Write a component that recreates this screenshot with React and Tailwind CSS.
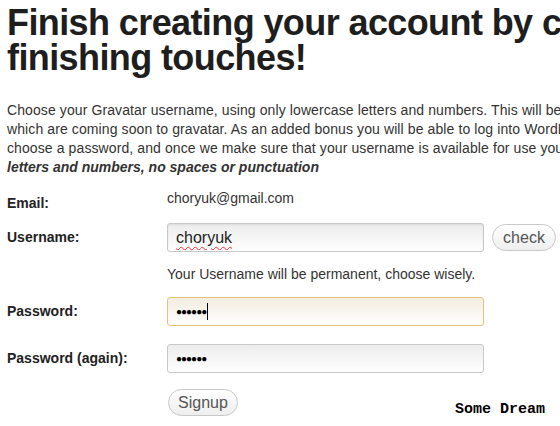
function Field({ label, children, labelClass = "" }) {
  return (
    <div className="flex items-center">
      <div className={"w-[160px] shrink-0 font-bold text-[14px] text-[#222] " + labelClass}>{label}</div>
      <div className="flex items-center">{children}</div>
    </div>
  );
}

export default function App() {
  return (
    <div className="w-[560px] h-[426px] overflow-hidden bg-white relative font-['Liberation_Sans',Arial,sans-serif] text-[#222]">
      <div className="pl-[7px] pt-[5px]">
        <h1 className="font-bold text-[36px] leading-[35px] text-[#1e1e1e] whitespace-nowrap tracking-[-0.6px]">
          Finish creating your account by choosing a username
          <br />
          finishing touches!
        </h1>
        <p className="mt-[26px] text-[14px] leading-[19px] text-[#333] whitespace-nowrap tracking-[0.1px]">
          Choose your Gravatar username, using only lowercase letters and numbers. This will be your
          <br />
          which are coming soon to gravatar. As an added bonus you will be able to log into WordPress
          <br />
          choose a password, and once we make sure that your username is available for use you
          <br />
          <b className="italic tracking-normal">letters and numbers, no spaces or punctuation</b>
        </p>
        <div className="mt-[5px] flex flex-col">
          <Field label="Email:" labelClass="pt-[11px]">
            <span className="text-[14px] text-[#333]">choryuk@gmail.com</span>
          </Field>
          <div className="mt-[9px]">
            <Field label="Username:">
              <div className="w-[317px] h-[29px] border border-[#c8c8c8] rounded-[3px] bg-gradient-to-b from-[#ececec] to-white shadow-[inset_0_1px_2px_rgba(0,0,0,0.08)] flex items-center pl-[8px] text-[16px] text-[#222]">
                <span className="underline decoration-wavy decoration-red-500 decoration-[1px] underline-offset-[3px]">choryuk</span>
              </div>
              <button className="ml-[8px] w-[64px] h-[27px] rounded-full border border-[#c8c8c8] bg-gradient-to-b from-white to-[#eee] text-[16px] text-[#555]">
                check
              </button>
            </Field>
          </div>
          <div className="pl-[160px] mt-[12px] text-[14px] text-[#333]">
            Your Username will be permanent, choose wisely.
          </div>
          <div className="mt-[12px]">
            <Field label="Password:">
              <div className="w-[317px] h-[29px] border border-[#e3c57a] rounded-[3px] bg-gradient-to-b from-[#f2ece0] to-white flex items-center pl-[8px] text-[10px] tracking-[-1px] text-black">
                ●●●●●●<span className="ml-[1px] inline-block w-[1px] h-[17px] bg-black" />
              </div>
            </Field>
          </div>
          <div className="mt-[18px]">
            <Field label="Password (again):">
              <div className="w-[317px] h-[29px] border border-[#c8c8c8] rounded-[3px] bg-gradient-to-b from-[#ececec] to-white flex items-center pl-[8px] text-[10px] tracking-[-1px] text-black">
                ●●●●●●
              </div>
            </Field>
          </div>
          <div className="pl-[161px] mt-[16px]">
            <button className="w-[70px] h-[27px] rounded-full border border-[#c8c8c8] bg-gradient-to-b from-white to-[#eee] text-[16px] text-[#555]">
              Signup
            </button>
          </div>
        </div>
      </div>
      <div className="absolute left-[455px] top-[399px] font-['Liberation_Mono',monospace] font-bold text-[15px] text-black">
        Some Dream
      </div>
    </div>
  );
}
